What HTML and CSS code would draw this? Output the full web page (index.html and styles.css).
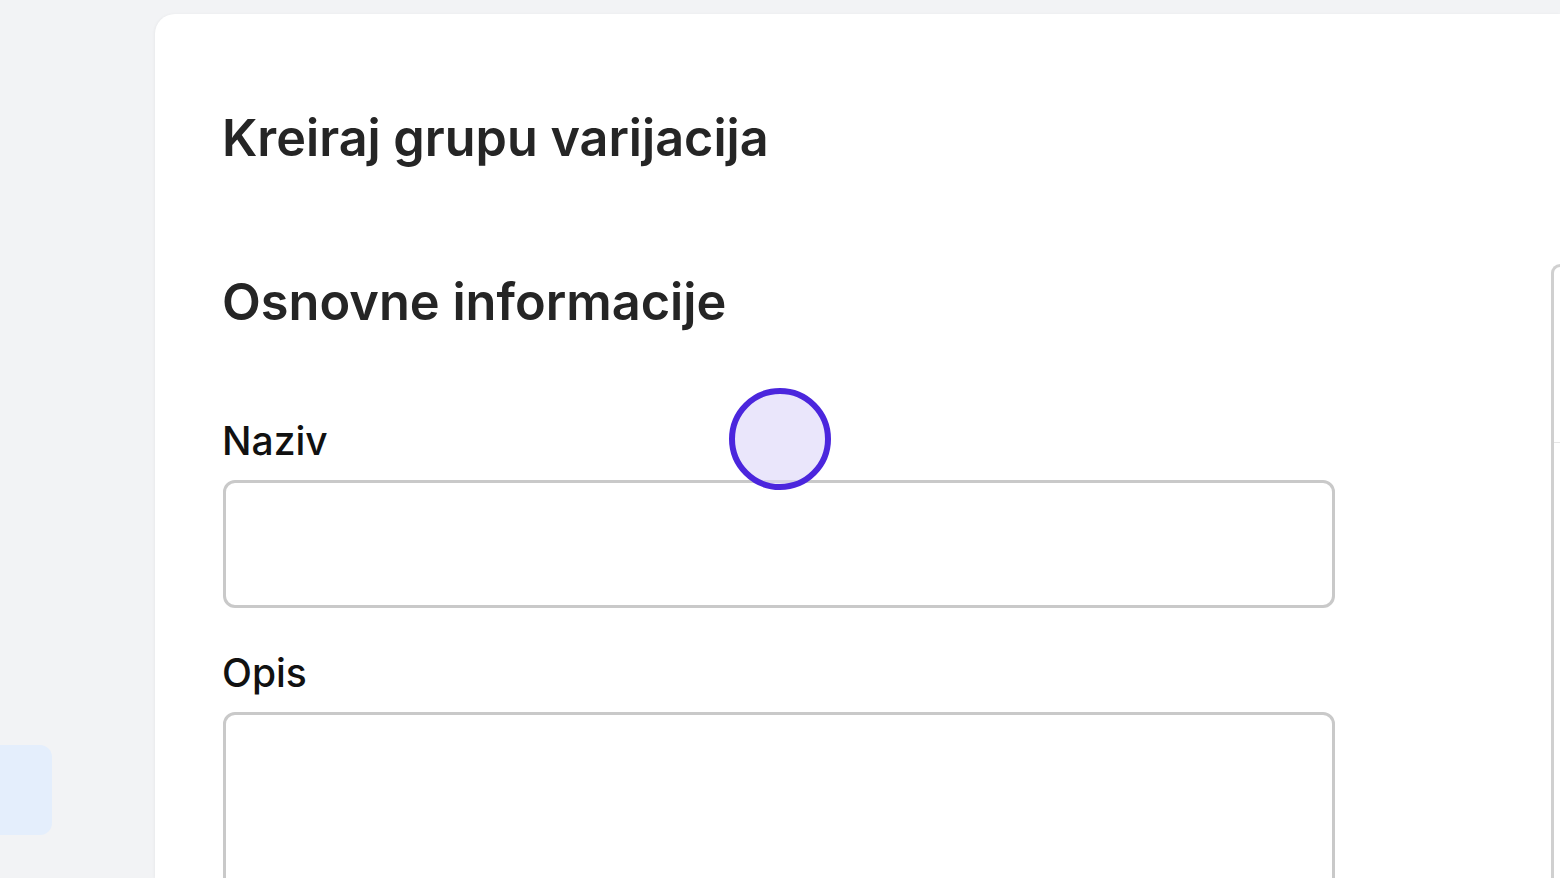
FILE: index.html
```html
<!DOCTYPE html>
<html lang="hr">
<head>
<meta charset="utf-8">
<title>Kreiraj grupu varijacija</title>
<link rel="stylesheet" href="styles.css">
</head>
<body>
<div class="app">
  <aside class="sidebar">
    <div class="side-item"></div>
  </aside>
  <main class="main">
    <section class="card">
      <h1 class="page-title">Kreiraj grupu varijacija</h1>
      <div class="content">
        <div class="form">
          <h2 class="section-title">Osnovne informacije</h2>
          <div class="field">
            <label class="label" for="naziv">Naziv</label>
            <input class="input" id="naziv" type="text">
          </div>
          <div class="field">
            <label class="label" for="opis">Opis</label>
            <textarea class="input textarea" id="opis"></textarea>
          </div>
        </div>
        <div class="side-panel">
          <div class="side-panel-head"></div>
        </div>
      </div>
    </section>
  </main>
</div>
<div class="cursor"></div>
</body>
</html>
```
FILE: styles.css
```css
html, body {
  margin: 0;
  padding: 0;
  height: 100%;
  overflow: hidden;
}
body {
  background: #f2f3f5;
  font-family: Inter, "Noto Sans", sans-serif;
  color: #222;
}
.app {
  display: flex;
  height: 878px;
}
.sidebar {
  width: 155px;
  flex: none;
  display: flex;
  flex-direction: column;
  justify-content: flex-end;
  padding-bottom: 43px;
  box-sizing: border-box;
}
.side-item {
  width: 64px;
  height: 90px;
  margin-left: -12px;
  background: #e4eefc;
  border-radius: 12px;
}
.main {
  flex: 1;
  padding-top: 14px;
  min-width: 0;
}
.card {
  background: #fff;
  border-radius: 20px 0 0 0;
  height: 100%;
  padding: 99px 0 0 67px;
  box-sizing: border-box;
  box-shadow: -1px 0 3px rgba(0,0,0,0.04);
}
.page-title {
  margin: 0;
  font-size: 50.3px;
  font-weight: 600;
  line-height: 1;
  letter-spacing: 0;
  color: #252525;
}
.content {
  display: flex;
  align-items: flex-start;
  gap: 216px;
  margin-top: 114px;
}
.form {
  width: 1113px;
  flex: none;
}
.section-title {
  margin: 0 0 93px;
  font-size: 50.5px;
  font-weight: 600;
  line-height: 1;
  letter-spacing: 0;
  color: #252525;
}
.field {
  display: flex;
  flex-direction: column;
  margin-bottom: 45px;
}
.label {
  font-size: 39px;
  font-weight: 500;
  line-height: 1;
  margin-bottom: 20px;
  color: #111;
}
.input {
  height: 128px;
  margin-left: 1px;
  box-sizing: border-box;
  border: 3px solid #c9c9c9;
  border-radius: 12px;
  background: #fff;
  outline: none;
  font: inherit;
  resize: none;
}
.textarea {
  height: 220px;
}
.side-panel {
  flex: 1;
  margin-top: -13px;
  height: 700px;
  border: 3px solid #d0d0d0;
  border-right: none;
  border-radius: 14px 0 0 0;
}
.side-panel-head {
  height: 175px;
  border-bottom: 1px solid #e6e6e6;
}
.cursor {
  position: absolute;
  left: 729px;
  top: 388px;
  width: 102px;
  height: 102px;
  box-sizing: border-box;
  border: 6px solid #4b26dd;
  border-radius: 50%;
  background: rgba(220, 214, 248, 0.6);
}
```
